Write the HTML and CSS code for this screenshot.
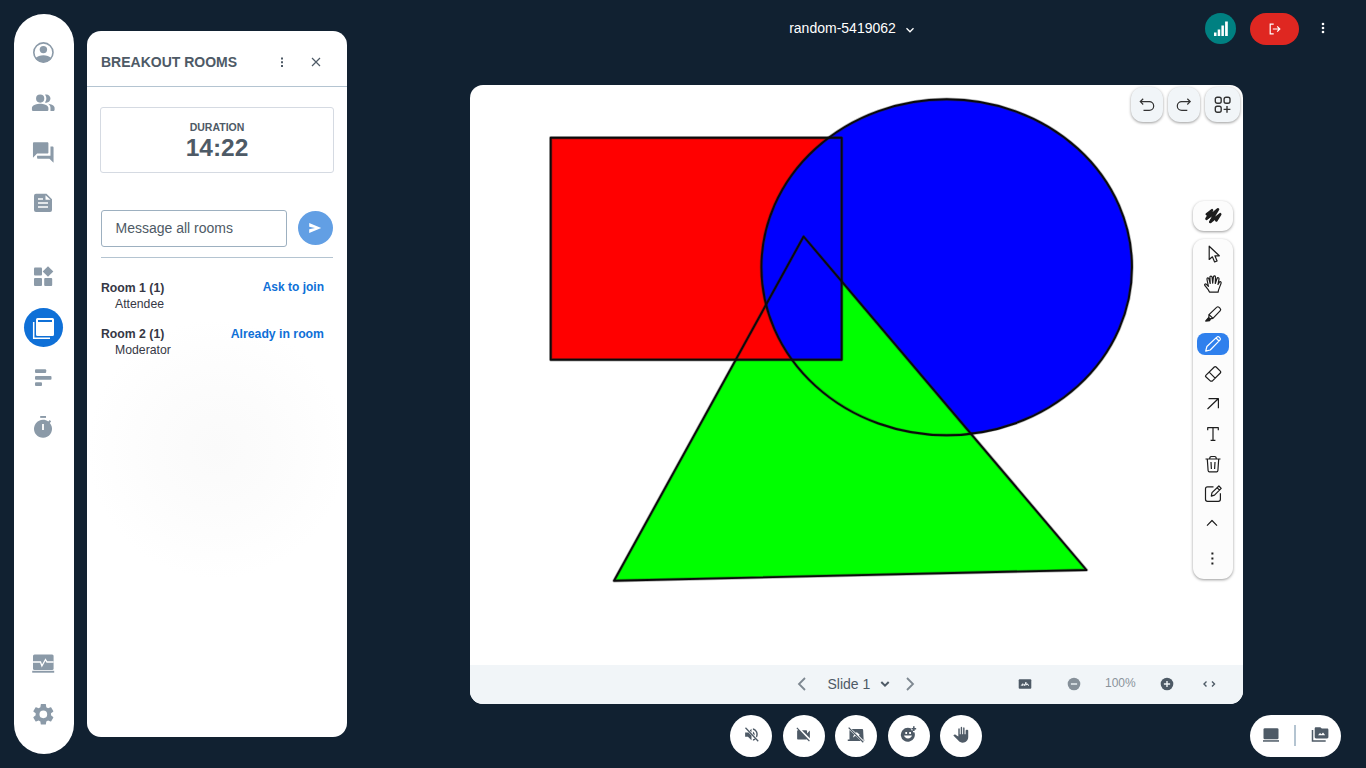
FILE: index.html
```html
<!DOCTYPE html>
<html lang="en">
<head>
<meta charset="utf-8">
<title>random-5419062</title>
<link rel="stylesheet" href="styles.css">
</head>
<body>
<nav class="sidebar">
  <button class="nav-item" aria-label="Profile"><svg viewBox="0 0 30 30"><circle cx="15.4" cy="14.5" r="9.6" fill="none" stroke="currentColor" stroke-width="1.6"/><circle cx="15.4" cy="11.6" r="3.7"/><path d="M7.3 20.3c2-2 5-3 8.100-3s6.100 1 8.100 3c-2 2.600-5 4-8.100 4s-6.100-1.400-8.100-4z"/></svg></button>
  <button class="nav-item" aria-label="Users"><svg viewBox="0 0 30 30"><path transform="translate(2.9 2.300) scale(1.03)" d="M16.670 13.130C18.040 14.060 19 15.320 19 17v3h3.200c.5 0 .8-.3.8-.8V17c0-2.180-3.570-3.470-6.330-3.870zM15 12c2.210 0 4-1.790 4-4s-1.790-4-4-4c-.47 0-.91.1-1.330.24C14.500 5.270 15 6.580 15 8s-.5 2.730-1.330 3.760c.42.14.86.24 1.330.24zM9 12a4 4 0 1 0 0-8 4 4 0 0 0 0 8zM9 13c-2.670 0-8 1.340-8 4v2.200c0 .5.300.8.800.8h14.400c.5 0 .8-.3.8-.8V17c0-2.660-5.330-4-8-4z"/></svg></button>
  <button class="nav-item" aria-label="Chat"><svg viewBox="0 0 30 30"><path transform="translate(2.900 2.200) scale(1.03)" d="M21 6h-2v9H6v2c0 .55.45 1 1 1h11l4 4V7c0-.55-.45-1-1-1zm-4 6V3c0-.55-.45-1-1-1H3c-.55 0-1 .45-1 1v14l4-4h10c.55 0 1-.45 1-1z"/></svg></button>
  <button class="nav-item" aria-label="Notes"><svg viewBox="0 0 30 30"><path fill-rule="evenodd" d="M8 5.700h10.500l5.500 5.500V22a2 2 0 0 1-2 2H8a2 2 0 0 1-2-2V7.700a2 2 0 0 1 2-2zM17.500 7.200v4.500H22.500zM10 10.300v1.500h5v-1.500zM10 14.200v1.500h10v-1.500zM10 18.300v1.500h10v-1.500z"/></svg></button>
  <button class="nav-item apps" aria-label="Apps"><svg viewBox="0 0 30 30"><rect x="6" y="5.500" width="8" height="8" rx="1"/><rect x="6" y="16" width="8" height="8" rx="1"/><rect x="16.200" y="16" width="8" height="8" rx="1"/><path d="M20 4.300l5.300 5.200-5.300 5.300-5.300-5.300z"/></svg></button>
  <button class="nav-item active" aria-label="Breakout rooms"><svg viewBox="0 0 30 30"><path d="M5.700 9v16.200H22" fill="none" stroke="currentColor" stroke-width="1.500"/><path fill-rule="evenodd" d="M9.500 5h15a1.500 1.500 0 0 1 1.500 1.500v15a1.500 1.500 0 0 1-1.500 1.500h-15A1.500 1.500 0 0 1 8 21.500v-15A1.500 1.500 0 0 1 9.500 5zM10 7v2h14V7z"/></svg></button>
  <button class="nav-item" aria-label="Polls"><svg viewBox="0 0 30 30"><rect x="7" y="7.200" width="11.200" height="3.800" rx="1"/><rect x="7" y="14" width="16.500" height="3.700" rx="1"/><rect x="7" y="20.200" width="7" height="3.700" rx="1"/></svg></button>
  <button class="nav-item" aria-label="Timer"><svg viewBox="0 0 30 30"><path fill-rule="evenodd" d="M15 7.800c2 0 3.800.6 5.300 1.700l1.500-1.400 1.300 1.300-1.300 1.500A9 9 0 1 1 15 7.800zM14.100 12v6h1.800v-6z"/><rect x="12.200" y="4" width="5.800" height="1.900"/></svg></button>
  <button class="nav-item diagnostics" aria-label="Connection status"><svg viewBox="0 0 30 30"><rect x="5" y="6.500" width="20.600" height="15.500" rx="1.500"/><path class="knockout" d="M5 14h7.500l1.400 4 3.600-6.500 1.400 2.500h6.700" fill="none" stroke-width="1.300"/><rect x="4.200" y="22.800" width="22" height="1.900"/></svg></button>
  <button class="nav-item" aria-label="Settings"><svg viewBox="0 0 30 30"><path transform="translate(2.500 3.500) scale(1.070)" d="M19.140 12.940c.04-.3.06-.61.06-.94 0-.32-.02-.64-.07-.94l2.030-1.580c.18-.14.23-.41.12-.61l-1.920-3.320c-.12-.22-.37-.29-.59-.22l-2.390.96c-.5-.38-1.030-.7-1.620-.94l-.36-2.540c-.04-.24-.24-.41-.48-.41h-3.840c-.24 0-.43.17-.47.41l-.36 2.540c-.59.24-1.130.57-1.620.94l-2.390-.96c-.22-.08-.47 0-.59.22L2.740 8.870c-.12.21-.08.47.12.61l2.030 1.580c-.05.3-.09.63-.09.94s.02.64.07.94l-2.030 1.580c-.18.14-.23.41-.12.61l1.920 3.320c.12.22.37.29.59.22l2.390-.96c.5.38 1.030.7 1.620.94l.36 2.540c.05.24.24.41.48.41h3.840c.24 0 .44-.17.47-.41l.36-2.540c.59-.24 1.130-.56 1.620-.94l2.390.96c.22.08.47 0 .59-.22l1.920-3.320c.12-.22.07-.47-.12-.61l-2.010-1.580zM12 15.600a3.600 3.600 0 1 1 0-7.200 3.600 3.600 0 0 1 0 7.200z"/></svg></button>
</nav>

<aside class="panel">
  <header class="panel-head">
    <h2>BREAKOUT ROOMS</h2>
    <svg class="panel-more" viewBox="0 0 14 14"><path d="M6 2.500h2v2H6zM6 6.200h2v2H6zM6 9.900h2v2H6z"/></svg>
    <svg class="panel-close" viewBox="0 0 14 14"><path d="M3 3l8 8M11 3l-8 8" fill="none" stroke="currentColor" stroke-width="1.200"/></svg>
  </header>
  <div class="panel-body">
    <section class="duration"><span class="duration-label">DURATION</span><span class="duration-time">14:22</span></section>
    <form class="message-row">
      <div class="message-input">Message all rooms</div>
      <div class="send"><svg viewBox="0 0 14 14"><path d="M1.200 2l12 5-12 5V8.300L7 7 1.200 5.700z"/></svg></div>
    </form>
    <ul class="rooms">
      <li><div class="room-line"><b>Room 1 (1)</b><a>Ask to join</a></div><span>Attendee</span></li>
      <li><div class="room-line"><b>Room 2 (1)</b><a class="joined">Already in room</a></div><span>Moderator</span></li>
    </ul>
  </div>
</aside>

<main class="main">
  <header class="topbar">
    <div class="meeting-title"><span>random-5419062</span><svg viewBox="0 0 10 10"><path d="M1.500 3.300L5 6.800l3.500-3.500" fill="none" stroke="currentColor" stroke-width="1.300"/></svg></div>
    <div class="top-actions">
      <div class="signal"><svg viewBox="0 0 16 16"><path d="M1 12.500h2.500V16H1zM4.700 9.500h2.500V16H4.700zM8.400 5.500h2.500V16H8.400zM12.100 1.500h2.700V16h-2.700z"/></svg></div>
      <div class="leave"><svg viewBox="0 0 14 14"><path d="M5.700 2.200H2.200v9.600h3.500M4.800 7h7M9.200 4.400L11.800 7 9.200 9.600" fill="none" stroke="currentColor" stroke-width="1.200"/></svg></div>
      <svg class="top-more" viewBox="0 0 14 14"><circle cx="7" cy="3" r="1.300"/><circle cx="7" cy="7" r="1.300"/><circle cx="7" cy="11" r="1.300"/></svg>
    </div>
  </header>

  <section class="presentation">
    <div class="canvas">
      <svg class="drawing" viewBox="0 0 773 580">
        <defs>
          <clipPath id="box"><rect x="80.700" y="52.700" width="291" height="222"/></clipPath>
          <g id="outlines">
            <rect x="80.700" y="52.700" width="291" height="222"/>
            <ellipse cx="476.700" cy="182.300" rx="185.300" ry="168"/>
            <path d="M333.600 151.500L616.500 485 144 495.800z"/>
          </g>
        </defs>
        <ellipse cx="476.700" cy="182.300" rx="185.300" ry="168" fill="#00f"/>
        <path d="M333.600 151.500L616.500 485 144 495.800z" fill="#0f0"/>
        <rect x="80.700" y="52.700" width="291" height="222" fill="#f00"/>
        <ellipse cx="476.700" cy="182.300" rx="185.300" ry="168" fill="#00f" clip-path="url(#box)"/>
        <use href="#outlines" fill="none" stroke="#222" stroke-opacity=".35" stroke-width="3.400" stroke-linejoin="round"/>
        <use href="#outlines" fill="none" stroke="#0b0b0b" stroke-width="1.900" stroke-linejoin="round"/>
      </svg>
      <div class="canvas-actions">
        <div class="chip"><svg viewBox="0 0 16 16"><path d="M4.200 1.800L1.300 4.600l2.900 2.900M1.500 4.600h8.800a4.400 4.400 0 0 1 0 8.800H4.500"/></svg></div>
        <div class="chip"><svg viewBox="0 0 16 16"><path d="M11.300 1.800l2.900 2.800-2.900 2.900M14 4.600H5.700a4.400 4.400 0 0 0 0 8.800H11.300"/></svg></div>
        <div class="chip wide"><svg viewBox="0 0 18 18"><rect x="1.300" y="1.300" width="5.900" height="5.900" rx="1.900"/><rect x="10.100" y="1.300" width="5.900" height="5.900" rx="1.900"/><rect x="1.300" y="10.300" width="5.900" height="5.900" rx="1.900"/><path d="M13 10v6.800M9.600 13.400h6.800"/></svg></div>
      </div>
      <div class="tools-stack">
        <div class="style-button"><svg viewBox="0 0 20 20"><path d="M3.800 8.200L9 4.200 3.500 12.800 15 3.300 7.300 16 17.200 8.200 13.300 14.500" fill="none" stroke="currentColor" stroke-width="2.600" stroke-linecap="round" stroke-linejoin="round"/><path d="M7.300 16L13 5M4 12.500l8-5" fill="none" stroke="currentColor" stroke-width="2" stroke-linecap="round"/></svg></div>
        <div class="tools">
          <div class="tool"><svg viewBox="0 0 20 20"><path d="M6.200 2.200v13.300l3.200-2.700 2.200 5.200 2.500-1.100-2.200-5.100h4.400z"/></svg></div>
          <div class="tool"><svg viewBox="0 0 20 20"><path d="M6.500 18.200c-.5-2-2.300-4-4.600-6.700-.9-1.100.4-2 1.500-1.200l2 2L4 5.500C3.700 3.700 5.500 3.300 6 5l1.200 4.500L6.900 3.300c0-1.700 2-1.700 2.200 0l.6 5.900.7-6.300c.2-1.500 2.100-1.300 2.100.3l-.2 6.300 1.700-5c.6-1.500 2.300-.8 2 .6l-1 5.400 1.400-2.200c.7-1.200 2-.5 1.700.8-.9 3.200-2.600 5.600-3 9.100z"/></svg></div>
          <div class="tool"><svg viewBox="0 0 20 20"><path d="M6 10.600l7.600-7.200c.9-.9 1.700-.8 2.500 0l1 1c.8.8.8 1.600 0 2.400L9.900 14.300zM6 10.600l-.2 3 1.300 1.200 2.800-.5M5.800 13.500L2.800 17l3.700-.3.900-1.700"/><path class="solid" d="M5.600 13.200l2.100 2.100-1 1.700-4.500.6z"/></svg></div>
          <div class="tool selected"><svg viewBox="0 0 20 20"><path d="M2.700 17.200l1.200-4.700 9.900-9.400c.8-.8 1.700-.7 2.400 0l.7.700c.7.700.7 1.500 0 2.300L7.200 16zM13 4l3 3"/></svg></div>
          <div class="tool"><svg viewBox="0 0 20 20"><path d="M2.800 11.400L11.300 3c.6-.6 1.200-.6 1.800 0l4.200 4.200c.6.600.6 1.200 0 1.800l-8.100 8.100H7.500l-4.700-4.300c-.5-.5-.5-.9 0-1.400zM6.200 8.200l5.900 5.900"/></svg></div>
          <div class="tool"><svg viewBox="0 0 20 20"><path d="M4.500 15L15.200 4.700M5.500 4.700h9.900v9.500"/></svg></div>
          <div class="tool"><svg viewBox="0 0 20 20"><path d="M4.700 6.300V3.700h10.600v2.600M10 3.700v12.500M7.600 16.300h4.800"/></svg></div>
          <div class="tool"><svg viewBox="0 0 20 20"><path d="M2.500 5h15M6.700 4.800c0-1.600.5-2.300 1.600-2.300h3.400c1.100 0 1.600.7 1.600 2.300M4.300 5l.8 11.500c.1.900.6 1.300 1.300 1.300h7.200c.7 0 1.200-.4 1.300-1.300L15.700 5M8 8l.4 7M12 8l-.4 7"/></svg></div>
          <div class="tool"><svg viewBox="0 0 20 20"><path d="M10.500 2.800h-6c-1.200 0-2 .8-2 2v10.500c0 1.200.8 2 2 2h10.900c1.200 0 2-.8 2-2V9.300M8.300 12.100l.7-3.500L15.900 2l2.300 2.400-6.700 6.700zM14.100 3.700l2.400 2.400"/></svg></div>
          <div class="tool"><svg viewBox="0 0 20 20"><path d="M4 11.700L9 6.500l5 5.200"/></svg></div>
          <div class="tool tool-more"><svg viewBox="0 0 20 20"><path class="solid" d="M8.400 3.500h2v2h-2zM8.400 8.500h2v2h-2zM8.400 13.500h2v2h-2z"/></svg></div>
        </div>
      </div>
    </div>
    <footer class="slidebar">
      <div class="slide-nav">
        <svg class="step" viewBox="0 0 16 16"><path d="M11 2L5 8l6 6"/></svg>
        <span class="slide-name">Slide 1</span>
        <svg class="caret" viewBox="0 0 12 12"><path d="M2.300 4L6 7.700 9.700 4"/></svg>
        <svg class="step" viewBox="0 0 16 16"><path d="M5 2l6 6-6 6"/></svg>
      </div>
      <div class="zoom-nav">
        <svg viewBox="0 0 14 14"><rect x=".7" y="2.300" width="12.600" height="9.400" rx="1"/><path class="line-light thin" d="M3.200 8.700l1.500-2v2l1.500-1.500.5 1.500 1.200-3.500.3 3 1-1.500.8 1.500h1"/></svg>
        <svg class="faded" viewBox="0 0 14 14"><circle cx="7" cy="7" r="6.300"/><path class="line-light" d="M3.900 7h6.200"/></svg>
        <span class="percent">100%</span>
        <svg viewBox="0 0 14 14"><circle cx="7" cy="7" r="6.300"/><path class="line-light" d="M3.900 7h6.200M7 3.900v6.200"/></svg>
        <svg viewBox="0 0 14 14"><path d="M4.500 4.500L2 7l2.500 2.500M10 4.500L12.500 7 10 9.500" fill="none" stroke="currentColor" stroke-width="1.400"/></svg>
      </div>
    </footer>
  </section>

  <footer class="actions">
    <div class="media">
      <button class="round" aria-label="Audio"><svg viewBox="0 0 24 24"><path d="M3 9v6h4l5 5v-6.600L7.300 8.700 7 9zM12 4L9.500 6.500 12 9zM14 7.800v3.200l2.300 2.300c.6-2.300-.4-4.600-2.300-5.500zM14 3.200v2.100c4 1.200 6 5.500 4.200 9.400l1.500 1.500C22.700 11 19.900 4.600 14 3.200zM14 15.500v5.300c1.400-.3 2.700-1 3.800-1.900l-1.400-1.400c-.7.500-1.500.9-2.400 1.200z"/><path d="M3.500 2.500l18 19" fill="none" stroke="currentColor" stroke-width="1.800"/></svg></button>
      <button class="round" aria-label="Camera"><svg viewBox="0 0 24 24"><path d="M21 6.500l-4 4V7c0-.55-.45-1-1-1H9.820L21 17.180zM3.270 2L2 3.270 4.730 6H4c-.55 0-1 .45-1 1v11c0 .55.45 1 1 1h12c.2 0 .39-.08.540-.180L19.730 22 21 20.730z"/></svg></button>
      <button class="round share" aria-label="Share screen"><svg viewBox="0 0 24 24"><path d="M3.300 5.300V18H1v2h17.500l-6.900-6.700c-1.400.2-2.600.9-3.600 2.300.2-1.500.8-3 1.900-3.900zM6 4l6.500 5.800V7.500l4.500 4-1.200 1.100L20.800 18H23v2h-.7L21.500 5.200c0-.7-.5-1.200-1.200-1.200z"/><path d="M2.200 2.200l19.500 19.500" fill="none" stroke="currentColor" stroke-width="1.700"/></svg></button>
      <button class="round" aria-label="Reactions"><svg viewBox="0 0 24 24"><path fill-rule="evenodd" d="M11 2.500c1.700 0 3.300.4 4.600 1.200V6h2.700v2.800h2A9.900 9.900 0 1 1 11 2.500zM7.500 8.500v2.700H10V8.500zM13 8.500v2.700h2.500V8.500zM5.700 13.500c.7 2.600 2.700 4 5.600 4s4.900-1.400 5.500-4z"/><path d="M19.500.5v6.600M16.200 3.800h6.600" fill="none" stroke="currentColor" stroke-width="2.200"/></svg></button>
      <button class="round" aria-label="Raise hand"><svg viewBox="0 0 24 24"><path d="M21.500 6.300V15.500c0 4.700-3.400 8-7.800 8-2.600 0-4.600-1-6.200-2.900L.5 13.300c1-1.300 2.300-1.500 3.600-.7l3.400 2.200V4.200c0-1.500 2-1.500 2 0v7.300h1.400V2.300c0-1.500 2-1.500 2 0v9.200h1.400V3c0-1.500 2-1.500 2 0v8.500h1.500V6.300c0-1.500 3.700-1.500 3.700 0z"/></svg></button>
    </div>
    <div class="layout-switch">
      <svg viewBox="0 0 18 18"><rect x="1.500" y="2.300" width="15" height="11" rx="1.300"/><rect x="1" y="14.200" width="16" height="1.500"/></svg>
      <i class="divider"></i>
      <svg viewBox="0 0 18 18"><path fill-rule="evenodd" d="M5 1.200h4.300l1.500 1.400h5.300c.8 0 1.300.5 1.300 1.300v7.200c0 .8-.5 1.300-1.300 1.300H5c-.8 0-1.300-.5-1.300-1.300V2.500c0-.8.500-1.300 1.300-1.300zM7 9.300h7.200L12 6.500l-1.500 1.800L9 7z"/><path d="M1.500 4v11h13.200" fill="none" stroke="currentColor" stroke-width="1.500"/></svg>
    </div>
  </footer>
</main>
</body>
</html>
```
FILE: styles.css
```css
* { box-sizing: border-box; }

body {
  display: flex;
  align-items: flex-start;
  width: 1366px;
  height: 768px;
  margin: 0;
  overflow: hidden;
  background: #112131;
  color: #4e5a66;
  font-family: "Liberation Sans", Arial, sans-serif;
  font-size: 14px;
}

svg { display: block; flex: none; fill: currentColor; }
button { margin: 0; padding: 0; border: 0; background: none; color: inherit; }

.sidebar {
  display: flex;
  flex: none;
  flex-direction: column;
  width: 60px;
  height: 740px;
  margin: 14px 13px 0 14px;
  padding: 14px 0 16px 10px;
  border-radius: 30px;
  background: #fff;
  color: #8b9aa8;
}
.nav-item {
  display: flex;
  flex: none;
  align-items: center;
  justify-content: center;
  width: 39px;
  height: 50px;
}
.nav-item svg { width: 30px; height: 30px; margin-left: -1px; }
.nav-item.apps { margin-top: 24px; }
.nav-item.active { height: 39px; margin: 6px 0 5px; border-radius: 50%; background: #0f70d7; color: #fff; }
.nav-item.diagnostics { margin-top: auto; }
.knockout { stroke: #fff; }

.panel {
  flex: none;
  width: 260px;
  height: 706px;
  margin-top: 31px;
  border-radius: 14px;
  background: radial-gradient(circle at 130px 418px, #fafafa 0, #fcfcfc 60px, #fff 130px);
}
.panel-head {
  display: flex;
  align-items: center;
  height: 56px;
  padding: 6px 24px 0 14px;
  border-bottom: 1px solid #b4c4d1;
}
.panel-head h2 { margin: 0; font-size: 14px; line-height: 20px; }
.panel-head svg { width: 14px; height: 14px; }
.panel-more { margin-left: auto; }
.panel-close { margin-left: 20px; }
.panel-body { padding: 20px 14px 0; }
.duration {
  display: flex;
  flex-direction: column;
  align-items: center;
  height: 66px;
  margin: 0 -1px;
  padding-top: 12px;
  border: 1px solid #d5dae2;
  border-radius: 3px;
  font-weight: bold;
}
.duration-label { font-size: 10.5px; line-height: 14px; }
.duration-time { font-size: 24.5px; line-height: 27px; }
.message-row {
  display: flex;
  align-items: center;
  justify-content: space-between;
  height: 48px;
  margin: 37px 0 0;
  padding-bottom: 11px;
  border-bottom: 1px solid #b4c4d1;
}
.message-input {
  width: 186px;
  height: 37px;
  padding-left: 13.500px;
  border: 1px solid #9db0c0;
  border-radius: 3px;
  line-height: 35px;
}
.send {
  display: grid;
  place-items: center;
  width: 35px;
  height: 34px;
  padding-right: 2px;
  border-radius: 50%;
  background: #629fe4;
  color: #fff;
}
.send svg { width: 14px; height: 14px; }
.rooms { margin: 22px 0 0; padding: 0; list-style: none; color: #363845; font-size: 12.250px; line-height: 16px; }
.rooms li { height: 46px; }
.rooms li > span { margin-left: 14px; }
.room-line { display: flex; justify-content: space-between; padding-right: 9px; }
.room-line a { margin-top: -1px; color: #0f70d7; font-size: 12px; font-weight: bold; line-height: 16px; }
.room-line .joined { margin-top: 0; font-size: 12.250px; }

.main { display: flex; flex: 1; flex-direction: column; height: 768px; }
.topbar {
  display: grid;
  grid-template-columns: 1fr auto 1fr;
  flex: none;
  height: 85px;
  padding: 13px 36px 0 27px;
  color: #fff;
}
.meeting-title { display: flex; grid-column: 2; align-items: center; height: 30px; gap: 9px; }
.meeting-title svg { width: 10px; height: 10px; margin-top: 4px; }
.top-actions { display: flex; justify-content: flex-end; }
.signal, .leave { display: grid; place-items: center; }
.signal { width: 31px; height: 31px; border-radius: 50%; background: #008081; }
.signal svg { width: 16px; height: 16px; margin-top: -2px; }
.leave { width: 49px; height: 32px; margin: 0 17px 0 14px; border-radius: 16px; background: #df2721; }
.leave svg { width: 14px; height: 14px; }
.top-more { width: 14px; height: 14px; margin-top: 8px; }

.presentation {
  flex: none;
  align-self: center;
  width: 773px;
  height: 619px;
  overflow: hidden;
  border-radius: 13px;
  background: #fff;
}
.canvas { position: relative; height: 580px; }
.drawing { width: 773px; height: 580px; }
.canvas-actions { position: absolute; top: 2px; right: 3px; display: flex; gap: 5px; }
.chip {
  display: grid;
  place-items: center;
  width: 32px;
  height: 35px;
  border-radius: 12px;
  background: #f1f5f8;
  box-shadow: 0 1px 3px rgba(0, 0, 0, .4);
  color: #333;
}
.chip.wide { width: 35px; }
.chip svg { width: 16px; height: 16px; fill: none; stroke: currentColor; stroke-width: 1.200; }
.chip.wide svg { width: 18px; height: 18px; stroke-width: 1.400; }
.tools-stack { position: absolute; top: 116px; right: 10px; display: flex; flex-direction: column; gap: 8px; width: 40px; color: #1d1d1d; }
.style-button, .tools { border-radius: 11px; background: #fcfcfc; box-shadow: 0 1px 3px rgba(0, 0, 0, .4); }
.style-button { display: grid; place-items: center; height: 30px; }
.style-button svg { width: 20px; height: 20px; }
.tools { height: 340px; padding: 0 4px; }
.tool { display: grid; place-items: center; height: 30px; }
.tool svg { width: 20px; height: 20px; fill: none; stroke: currentColor; stroke-width: 1.200; stroke-linejoin: round; }
.tool .solid { fill: currentColor; stroke: none; }
.tool.selected { height: 22px; margin: 4px 0; border-radius: 8px; background: #2f80ed; color: #fff; }
.tool-more { margin-top: 5px; }

.slidebar { display: flex; align-items: center; height: 39px; padding: 0 27px 2px 324px; background: #f1f5f8; }
.slide-nav { display: flex; align-items: center; }
.slide-name { margin: 0 9px 0 17.500px; }
.slide-nav svg { fill: none; stroke: currentColor; }
.step { width: 16px; height: 16px; stroke-width: 1.800; opacity: .7; }
.caret { width: 12px; height: 12px; margin-right: 11px; stroke-width: 2; }
.zoom-nav { display: flex; align-items: center; margin-left: auto; }
.zoom-nav svg { width: 14px; height: 14px; }
.zoom-nav .faded { margin: 0 25px 0 35px; opacity: .65; }
.zoom-nav .percent { width: 31px; margin: -2px 23px 0 -1px; color: #8a939b; font-size: 12px; }
.percent + svg { margin: 0 28px 0 1px; }
.line-light { fill: none; stroke: #f1f5f8; stroke-width: 1.400; }
.line-light.thin { stroke-width: 1; }

.actions { display: grid; grid-template-columns: 1fr auto 1fr; align-items: start; padding: 11px 25px 0 24px; }
.media { display: flex; grid-column: 2; gap: 10.500px; }
.round { display: grid; place-items: center; width: 42px; height: 42px; padding-bottom: 3px; border-radius: 50%; background: #fff; }
.round svg { width: 17px; height: 17px; }
.round.share svg { width: 18px; height: 18px; }
.layout-switch {
  display: flex;
  align-items: center;
  justify-content: space-between;
  justify-self: end;
  width: 91px;
  height: 42px;
  padding: 0 12px;
  border-radius: 21px;
  background: #fff;
}
.layout-switch svg { width: 18px; height: 18px; margin-top: -3px; }
.divider { width: 2px; height: 21px; margin: 0 1px 2px 0; background: #b4c4d1; }
```
